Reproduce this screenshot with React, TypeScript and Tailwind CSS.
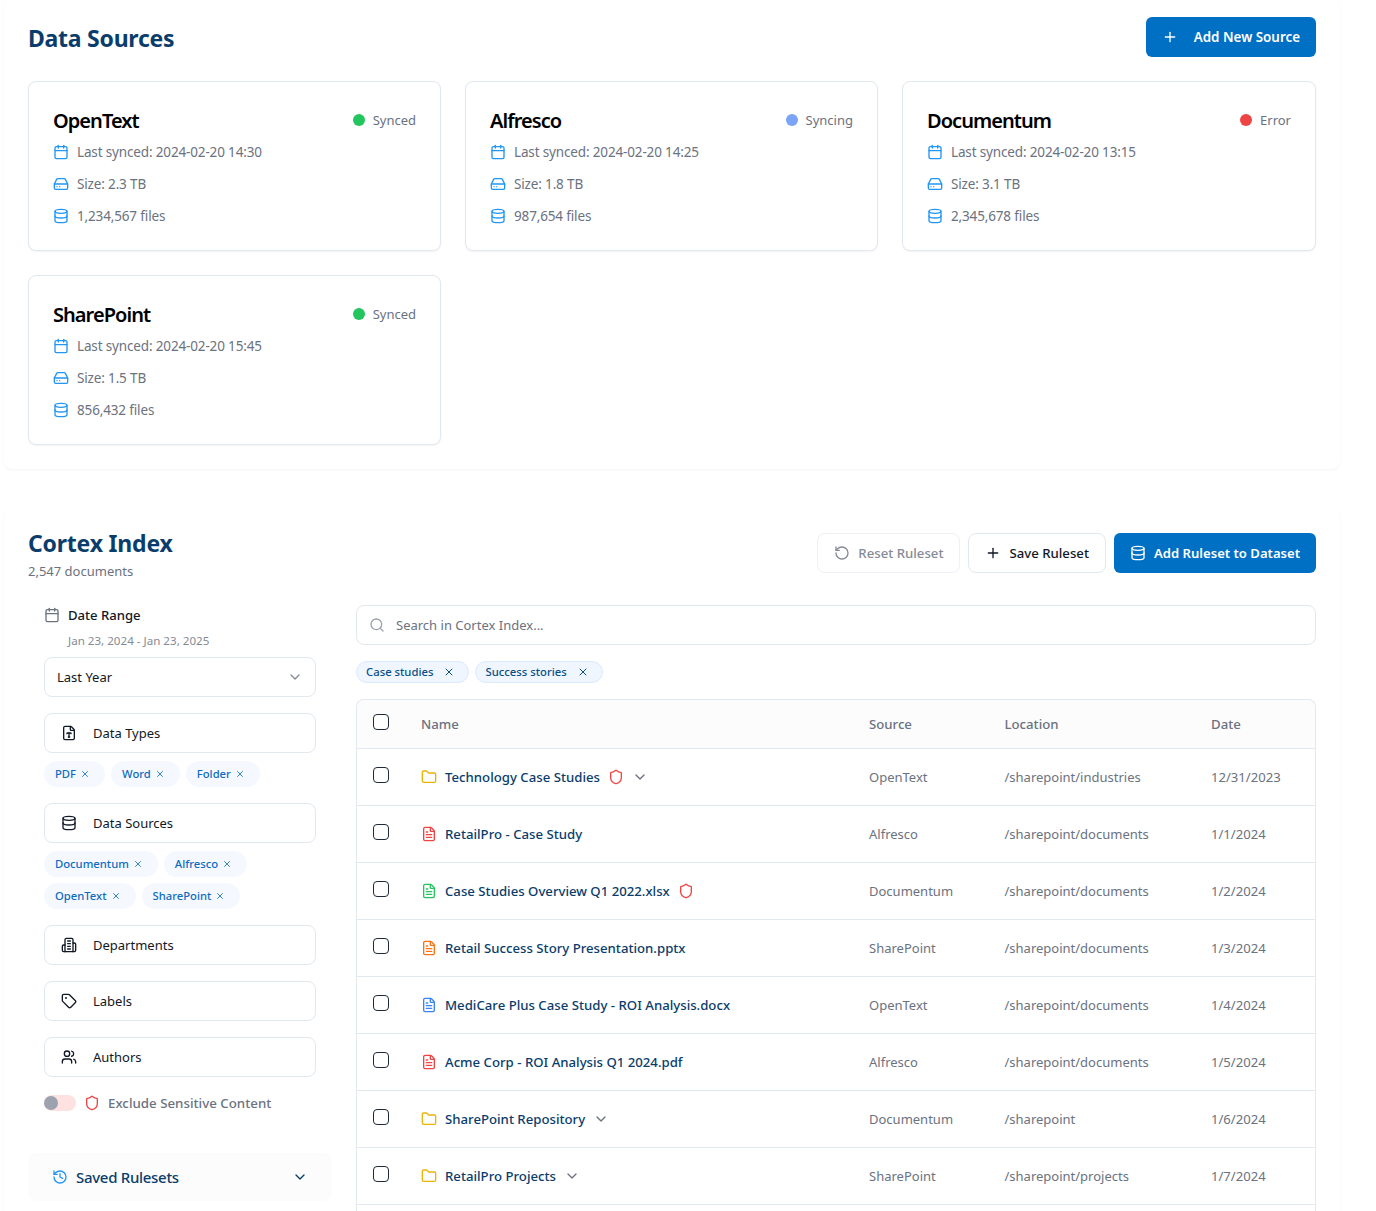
import { Plus, Calendar, HardDrive, Database, FileType, Tag, Users, Shield, History, RotateCcw, Search, ChevronDown, Folder, FileText, X } from "lucide-react";

const sources = [
  { name: "OpenText", status: "Synced", dot: "bg-[#22c55e]", synced: "2024-02-20 14:30", size: "2.3 TB", files: "1,234,567" },
  { name: "Alfresco", status: "Syncing", dot: "bg-[#7ba4f8]", synced: "2024-02-20 14:25", size: "1.8 TB", files: "987,654" },
  { name: "Documentum", status: "Error", dot: "bg-[#ef4444]", synced: "2024-02-20 13:15", size: "3.1 TB", files: "2,345,678" },
  { name: "SharePoint", status: "Synced", dot: "bg-[#22c55e]", synced: "2024-02-20 15:45", size: "1.5 TB", files: "856,432" },
];

function DepartmentsIcon() {
  return (
    <svg width="16" height="16" viewBox="0 0 24 24" fill="none" stroke="currentColor" strokeWidth="2" strokeLinecap="round" strokeLinejoin="round">
      <path d="M6 22V4a2 2 0 0 1 2-2h8a2 2 0 0 1 2 2v18Z" />
      <path d="M6 12H4a2 2 0 0 0-2 2v6a2 2 0 0 0 2 2h2" />
      <path d="M18 9h2a2 2 0 0 1 2 2v9a2 2 0 0 1-2 2h-2" />
      <path d="M10 6h4" />
      <path d="M10 10h4" />
      <path d="M10 14h4" />
      <path d="M10 18h4" />
    </svg>
  );
}

function SourceCard({ s }: { s: (typeof sources)[number] }) {
  return (
    <div className="h-[170px] rounded-lg border border-[#e2e8f0] bg-white px-6 pt-[24px] shadow-[0_1px_2px_rgba(0,0,0,0.05)]">
      <div className="flex h-[30px] items-start justify-between">
        <span className="text-[20px] leading-[30px] font-semibold tracking-[-0.95px] text-black">{s.name}</span>
        <span className="flex h-[30px] items-center gap-2 pb-[2px] text-[13px] text-[#6b7280]">
          <span className={`h-3 w-3 rounded-full ${s.dot}`} />
          <span className="pt-px">{s.status}</span>
        </span>
      </div>
      <div className="flex flex-col text-[13.5px] leading-[32px] tracking-[-0.15px] text-[#6b7280]">
        <Row icon={<Calendar size={16} />} text={`Last synced: ${s.synced}`} />
        <Row icon={<HardDrive size={16} />} text={`Size: ${s.size}`} />
        <Row icon={<Database size={16} />} text={`${s.files} files`} />
      </div>
    </div>
  );
}

function Row({ icon, text }: { icon: React.ReactNode; text: string }) {
  return (
    <div className="flex h-[32px] items-center gap-2">
      <span className="text-[#2196f3]">{icon}</span>
      <span>{text}</span>
    </div>
  );
}

function Filter({ icon, label }: { icon: React.ReactNode; label: string }) {
  return (
    <div className="flex h-10 items-center gap-4 rounded-lg border border-[#e2e8f0] bg-white px-4 text-[13px] text-[#111827]">
      {icon}
      <span className="pt-[2px]">{label}</span>
    </div>
  );
}

function Chip({ label }: { label: string }) {
  return (
    <span className="flex h-[26px] items-center gap-[3px] rounded-full bg-[#f5f9ff] pr-[14px] pl-[11px] text-[11.25px] font-medium text-[#0d6cbf]">
      {label}
      <X size={12} strokeWidth={2} className="p-[1px]" />
    </span>
  );
}

type Item = { name: string; kind: "folder" | "pdf" | "xls" | "ppt" | "doc"; shield?: boolean; chevron?: boolean; source: string; location: string; date: string };
const items: Item[] = [
  { name: "Technology Case Studies", kind: "folder", shield: true, chevron: true, source: "OpenText", location: "/sharepoint/industries", date: "12/31/2023" },
  { name: "RetailPro - Case Study", kind: "pdf", source: "Alfresco", location: "/sharepoint/documents", date: "1/1/2024" },
  { name: "Case Studies Overview Q1 2022.xlsx", kind: "xls", shield: true, source: "Documentum", location: "/sharepoint/documents", date: "1/2/2024" },
  { name: "Retail Success Story Presentation.pptx", kind: "ppt", source: "SharePoint", location: "/sharepoint/documents", date: "1/3/2024" },
  { name: "MediCare Plus Case Study - ROI Analysis.docx", kind: "doc", source: "OpenText", location: "/sharepoint/documents", date: "1/4/2024" },
  { name: "Acme Corp - ROI Analysis Q1 2024.pdf", kind: "pdf", source: "Alfresco", location: "/sharepoint/documents", date: "1/5/2024" },
  { name: "SharePoint Repository", kind: "folder", chevron: true, source: "Documentum", location: "/sharepoint", date: "1/6/2024" },
  { name: "RetailPro Projects", kind: "folder", chevron: true, source: "SharePoint", location: "/sharepoint/projects", date: "1/7/2024" },
];

function KindIcon({ kind }: { kind: Item["kind"] }) {
  if (kind === "folder") return <Folder size={16} className="text-[#eab308]" />;
  const color = { pdf: "text-[#ef4444]", xls: "text-[#22c55e]", ppt: "text-[#f97316]", doc: "text-[#3b82f6]" }[kind];
  return <FileText size={16} className={color} />;
}

const cols = "grid grid-cols-[64px_448px_135.5px_206.5px_1fr] items-center";

function Check() {
  return <span className="ml-4 block h-4 w-4 -translate-y-[2px] rounded-[4px] border border-[#1f2937] bg-white" />;
}

export default function App() {
  return (
    <div className="h-[1211px] w-[1376px] overflow-hidden bg-white font-['Noto_Sans',sans-serif]">
      <div className="ml-1 flex w-[1336px] flex-col gap-10">
        <section className="rounded-lg bg-white px-6 pt-[17px] pb-6 shadow-[0_1px_3px_rgba(0,0,0,0.05)]">
          <div className="mb-6 flex h-10 items-center justify-between">
            <h2 className="pt-[3px] text-[23px] font-bold tracking-[-0.25px] text-[#0a3d6b]">Data Sources</h2>
            <button className="flex h-10 items-center gap-[16px] rounded-md bg-[#0070c4] pr-4 pl-4 text-[13.4px] font-semibold text-white">
              <Plus size={16} />
              Add New Source
            </button>
          </div>
          <div className="grid grid-cols-[413px_413px_414px] gap-6">
            {sources.map((s) => (
              <SourceCard key={s.name} s={s} />
            ))}
          </div>
        </section>

        <section className="rounded-lg bg-white px-6 pt-6 pb-6 shadow-[0_1px_3px_rgba(0,0,0,0.05)]">
          <div className="flex items-start justify-between">
            <div>
              <h2 className="text-[23px] leading-[20px] font-bold tracking-[-0.2px] text-[#0a3d6b]">Cortex Index</h2>
              <p className="mt-[8px] text-[13px] leading-[20px] text-[#6b7280]">2,547 documents</p>
            </div>
            <div className="flex gap-2">
              <button className="flex h-10 items-center gap-2 rounded-lg border border-[#edf0f5] bg-white px-4 text-[13.2px] font-medium text-[#858b96]">
                <RotateCcw size={16} />
                <span className="pt-[2px]">Reset Ruleset</span>
              </button>
              <button className="flex h-10 items-center gap-2 rounded-lg border border-[#e2e8f0] bg-white px-4 text-[13.2px] font-medium text-[#111827]">
                <Plus size={16} />
                <span className="pt-[2px]">Save Ruleset</span>
              </button>
              <button className="flex h-10 items-center gap-2 rounded-md bg-[#0070c4] px-4 text-[13.1px] font-semibold text-white">
                <Database size={16} />
                <span className="pt-[2px]">Add Ruleset to Dataset</span>
              </button>
            </div>
          </div>

          <div className="mt-6 flex gap-6">
            <aside className="w-[304px] shrink-0">
              <div className="flex flex-col px-4">
                <div className="flex h-5 items-center gap-2 text-[13.1px] font-medium text-[#111827]">
                  <Calendar size={16} className="text-[#6b7280]" />
                  <span className="pt-[2px]">Date Range</span>
                </div>
                <div className="mt-[8px] pl-6 text-[11.6px] leading-[16px] text-[#858b96]">Jan 23, 2024 - Jan 23, 2025</div>
                <div className="mt-[8px] flex h-10 items-center justify-between rounded-lg border border-[#e2e8f0] bg-white pr-3 pl-3 text-[13px] text-[#111827]">
                  <span className="pt-[2px]">Last Year</span>
                  <ChevronDown size={16} className="text-[#858b96]" />
                </div>
                <div className="mt-4">
                  <Filter icon={<FileType size={16} />} label="Data Types" />
                </div>
                <div className="mt-2 flex flex-wrap gap-[6px]">
                  {["PDF", "Word", "Folder"].map((c) => <Chip key={c} label={c} />)}
                </div>
                <div className="mt-4">
                  <Filter icon={<Database size={16} />} label="Data Sources" />
                </div>
                <div className="mt-2 flex flex-wrap gap-[6px]">
                  {["Documentum", "Alfresco", "OpenText", "SharePoint"].map((c) => <Chip key={c} label={c} />)}
                </div>
                <div className="mt-4"><Filter icon={<DepartmentsIcon />} label="Departments" /></div>
                <div className="mt-4"><Filter icon={<Tag size={16} />} label="Labels" /></div>
                <div className="mt-4"><Filter icon={<Users size={16} />} label="Authors" /></div>
                <div className="mt-[18px] flex h-4 items-center gap-2">
                  <span className="flex h-4 w-8 items-center rounded-full bg-[#fee2e2]">
                    <span className="h-[14px] w-[14px] rounded-full bg-[#9ca3af]" />
                  </span>
                  <Shield size={16} className="text-[#ef4444]" />
                  <span className="pt-[2px] text-[13.3px] font-medium text-[#6b7280]">Exclude Sensitive Content</span>
                </div>
              </div>
              <div className="mt-[42px] flex h-12 items-center justify-between rounded-lg bg-[#fcfcfd] px-6">
                <span className="flex items-center gap-2 text-[15px] font-medium tracking-[-0.3px] text-[#0a3d6b]">
                  <History size={16} className="text-[#2196f3]" />
                  Saved Rulesets
                </span>
                <ChevronDown size={16} className="text-[#0a3d6b]" />
              </div>
            </aside>

            <div className="min-w-0 flex-1">
              <div className="flex h-10 items-center gap-[11px] rounded-lg border border-[#e2e8f0] bg-white px-3 text-[13px] text-[#6b7280]">
                <Search size={16} className="text-[#9ca3af]" />
                <span className="pt-[2px]">Search in Cortex Index...</span>
              </div>
              <div className="mt-4 flex gap-[6px]">
                {["Case studies", "Success stories"].map((t) => (
                  <span key={t} className="flex h-[22px] items-center gap-[10px] rounded-full border border-[#dbeafe] bg-[#eff6ff] pr-[13px] pl-[9px] text-[11.3px] font-medium text-[#0a4f86]">
                    <span className="pt-px">{t}</span>
                    <X size={12} />
                  </span>
                ))}
              </div>
              <div className="mt-4 overflow-hidden rounded-t-lg border border-b-0 border-[#e2e8f0]">
                <div className={`${cols} h-[49px] border-b border-[#e2e8f0] bg-[#fcfcfd] text-[13.2px] font-medium text-[#6b7280]`}>
                  <Check />
                  <span className="pt-[2px]">Name</span>
                  <span className="pt-[2px]">Source</span>
                  <span className="pt-[2px]">Location</span>
                  <span className="pt-[2px]">Date</span>
                </div>
                {items.map((it) => (
                  <div key={it.name} className={`${cols} h-[57px] border-b border-[#e2e8f0] text-[13px] text-[#6b7280]`}>
                    <Check />
                    <span className="flex items-center gap-2">
                      <KindIcon kind={it.kind} />
                      <span className="pt-[2px] text-[13.2px] font-medium text-[#0a3d6b]">{it.name}</span>
                      {it.shield && <Shield size={16} className="text-[#ef4444]" />}
                      {it.chevron && <ChevronDown size={16} className="text-[#6b7280]" />}
                    </span>
                    <span className="pt-[2px]">{it.source}</span>
                    <span className="pt-[2px]">{it.location}</span>
                    <span className="pt-[2px] text-[13.1px]">{it.date}</span>
                  </div>
                ))}
                <div className="h-[57px]" />
              </div>
            </div>
          </div>
        </section>
      </div>
    </div>
  );
}
